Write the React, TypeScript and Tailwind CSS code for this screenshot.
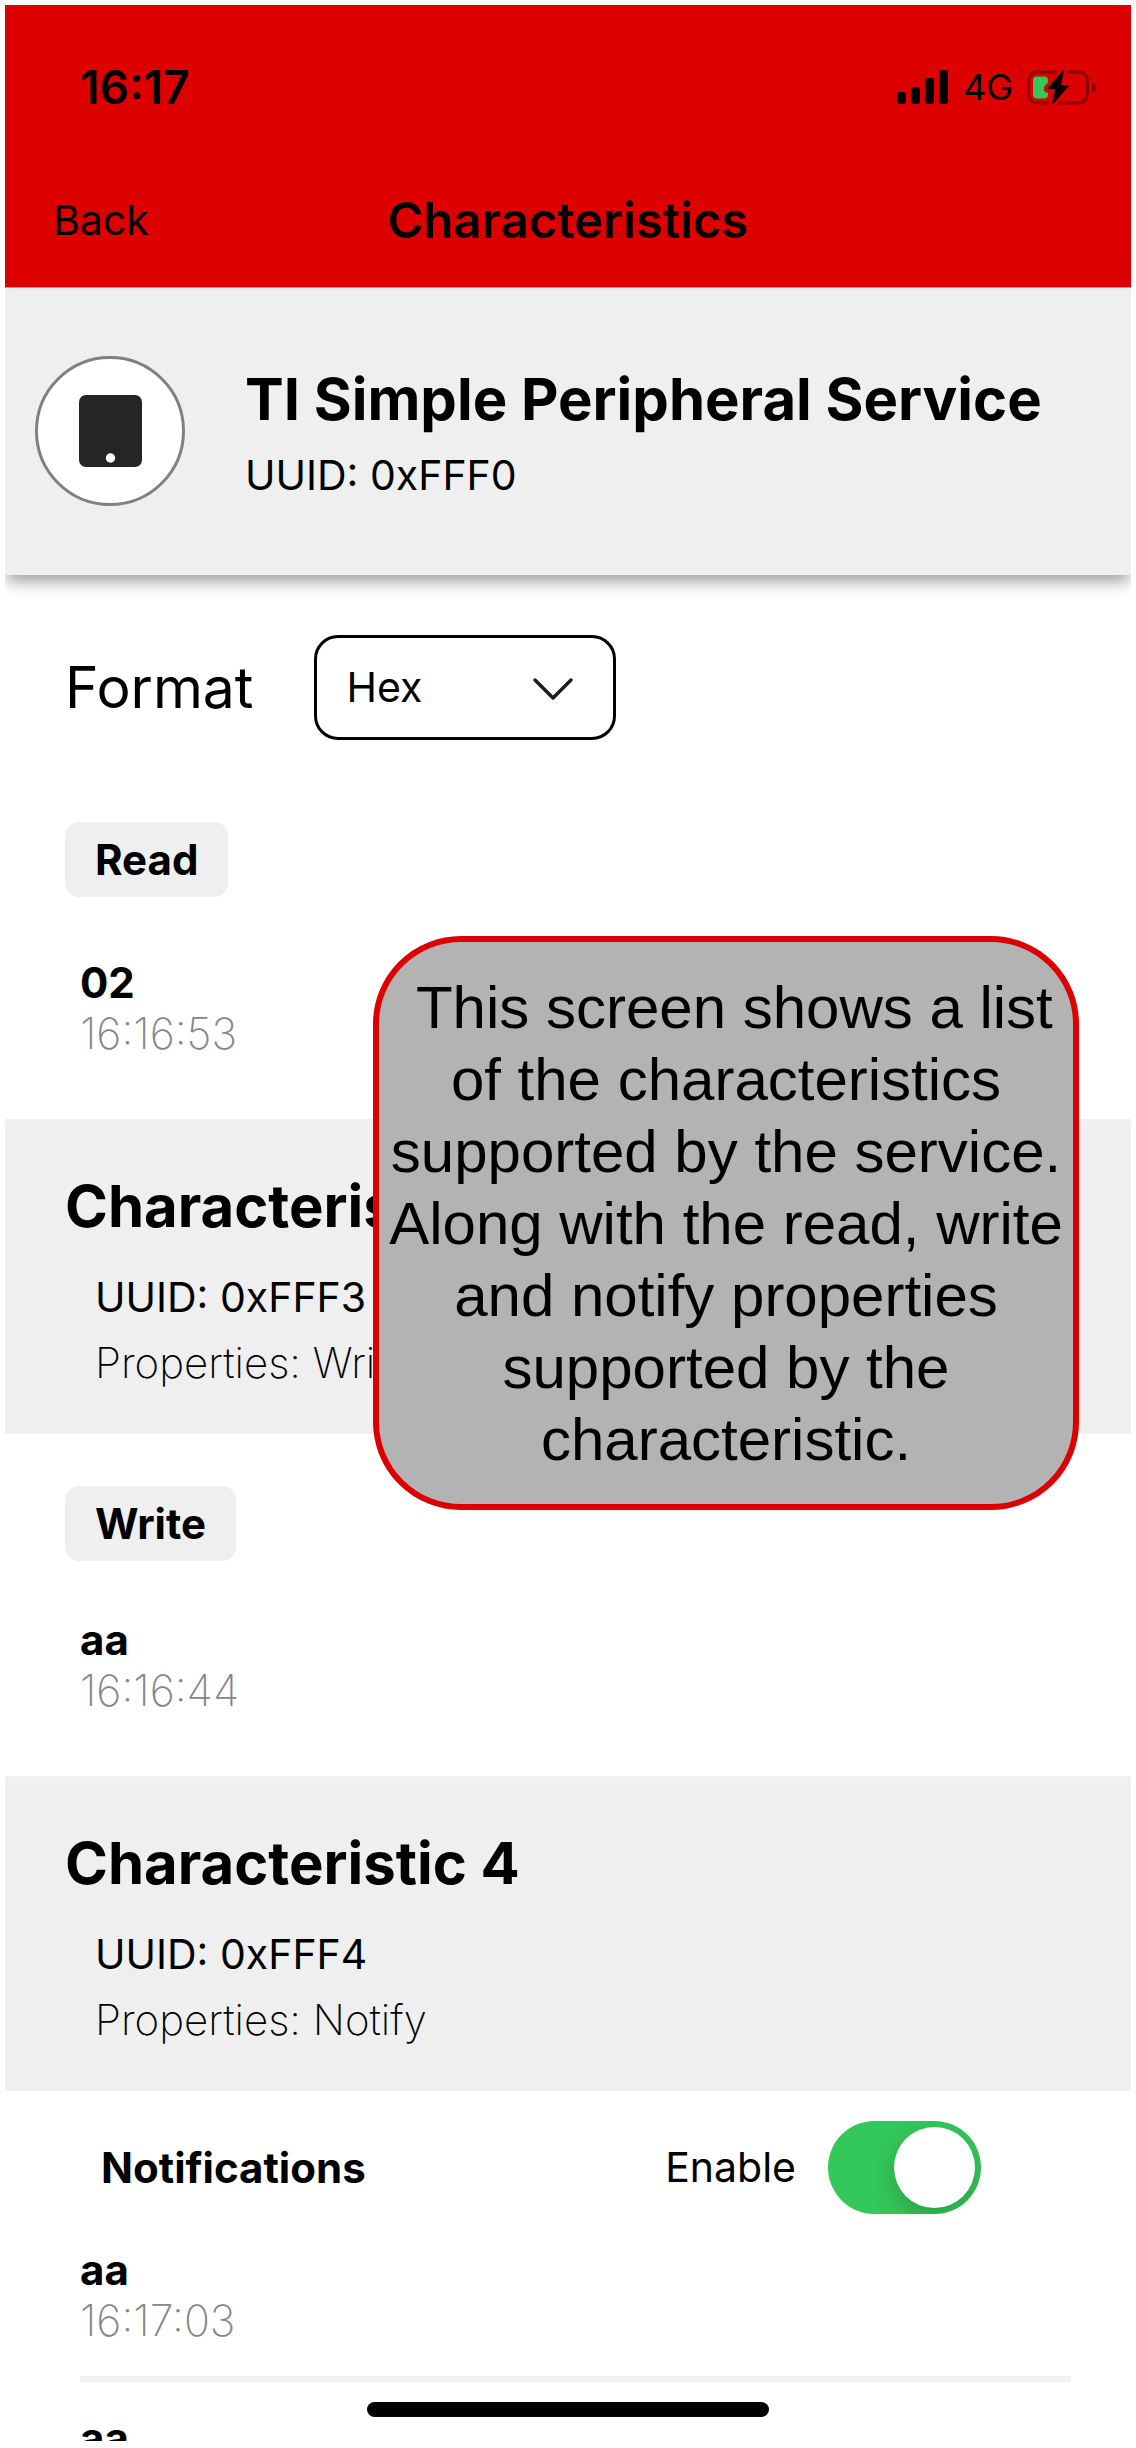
import { useId, useState } from "react";
import type { ReactNode } from "react";

function SignalBars() {
  return (
    <svg width="52" height="34" viewBox="0 0 52 34" aria-hidden="true">
      <rect x="0" y="22" width="9" height="12" rx="3" />
      <rect x="14" y="17" width="9" height="17" rx="3" />
      <rect x="28" y="8" width="9" height="26" rx="3" />
      <rect x="42" y="0" width="9" height="34" rx="3" />
    </svg>
  );
}

const BOLT = "M35.5 .8 20.5 18.2Q20 19.3 21 19.3H28L25.3 33.2Q25.6 34.4 26.6 33.5L41.8 16Q42.3 14.9 41.2 14.9H34L36.8 1.2Q36.6 0 35.5 .8Z";

function Battery() {
  return (
    <svg width="70" height="35" viewBox="0 0 70 35" aria-hidden="true">
      <rect x="1.5" y="2" width="59" height="31" rx="8.5" fill="none" stroke="#8b0000" strokeWidth="3" />
      <path d="M65 12.5Q69 14 69 17.5T65 22.5Z" fill="#8b0000" />
      <rect x="6" y="6.500" width="15" height="22" rx="4" fill="#34c759" />
      <path d={BOLT} fill="#dd0000" stroke="#dd0000" strokeWidth="7" strokeLinejoin="round" />
      <path d={BOLT} fill="#000" />
    </svg>
  );
}

function TabletIcon() {
  return (
    <svg width="63" height="72" viewBox="0 0 63 72" aria-hidden="true">
      <rect width="63" height="72" rx="7" fill="#252525" />
      <circle cx="31.500" cy="63" r="4.700" fill="#fff" />
    </svg>
  );
}

function Entry({ value, time }: { value: string; time: string }) {
  return (
    <div className="px-[75px] leading-[51px]">
      <p className="text-[42px] font-bold">{value}</p>
      <p className="text-[43px] font-extralight text-[#868686]">{time}</p>
    </div>
  );
}

function ActionButton({ children }: { children: ReactNode }) {
  return (
    <button type="button" className="ml-[60px] h-[75px] rounded-[14px] bg-[#efefef] px-[30px] text-[42px] font-bold">
      {children}
    </button>
  );
}

function CharacteristicHeader({ name, uuid, properties }: { name: string; uuid: string; properties: string }) {
  return (
    <header className="border-t-[6px] border-[#f1f1f1] bg-[#efefef] px-[60px] pt-[45px] pb-[38px]">
      <h2 className="text-[58px] leading-[72px] font-bold">{name}</h2>
      <div className="mt-[22px] px-[30px] leading-[66px]">
        <p className="text-[41px]">UUID: {uuid}</p>
        <p className="text-[42px] font-extralight">Properties: {properties}</p>
      </div>
    </header>
  );
}

export default function App() {
  const formatId = useId();
  const enableId = useId();
  const [format, setFormat] = useState("Hex");
  const [enabled, setEnabled] = useState(true);

  return (
    <div className="h-screen bg-white px-[5px] pt-[5px] pb-[7px] font-['Inter',sans-serif] text-black">
      <div className="relative flex h-full flex-col overflow-hidden">
        <div className="shrink-0 border-b border-[#b5a0a0] bg-[#dd0000] pb-[14px]">
          <div className="flex h-[164px] items-center justify-between pr-[34px] pl-[75px]">
            <span className="text-[46px] font-semibold">16:17</span>
            <div className="flex items-center">
              <SignalBars />
              <span className="mr-[14px] ml-[14px] text-[36px]">4G</span>
              <Battery />
            </div>
          </div>
          <nav className="grid h-[104px] grid-cols-[1fr_auto_1fr] items-center px-[48px]">
            <button type="button" className="justify-self-start text-[41px]">Back</button>
            <h1 className="text-[49px] font-semibold">Characteristics</h1>
          </nav>
        </div>

        <section className="relative z-10 flex h-[287px] shrink-0 items-center bg-[#efefef] pb-[2px] pl-[30px] shadow-[0_9px_14px_-2px_rgba(0,0,0,0.36)]">
          <div className="flex size-[150px] items-center justify-center rounded-full border-[3px] border-[#808080] bg-white">
            <TabletIcon />
          </div>
          <div className="ml-[60px] flex flex-col gap-4">
            <h2 className="text-[58px] leading-[72px] font-bold">TI Simple Peripheral Service</h2>
            <p className="text-[41px] leading-[48px]">UUID: 0xFFF0</p>
          </div>
        </section>

        <main className="min-h-0 flex-1 overflow-hidden pt-[60px]">
          <div className="flex items-center gap-[60px] px-[60px]">
            <label htmlFor={formatId} className="text-[57px]">Format</label>
            <div className="relative">
              <select
                id={formatId}
                value={format}
                onChange={(e) => setFormat(e.target.value)}
                className="block h-[105px] w-[302px] appearance-none rounded-[24px] border-[3px] border-black bg-white px-[30px] text-[41px]"
              >
                <option>Hex</option>
                <option>Text</option>
              </select>
              <svg className="pointer-events-none absolute top-[42px] right-[42px]" width="42" height="24" viewBox="0 0 42 24" fill="none" stroke="#1c1c1c" strokeWidth="3.500" strokeLinecap="round" strokeLinejoin="round" aria-hidden="true">
                <path d="M3 3 21 21 39 3" />
              </svg>
            </div>
          </div>

          <section className="pt-[82px] pb-[60px]">
            <ActionButton>Read</ActionButton>
            <div className="mt-[60px]">
              <Entry value="02" time="16:16:53" />
            </div>
          </section>

          <CharacteristicHeader name="Characteristic 3" uuid="0xFFF3" properties="Write" />
          <section className="pt-[52px] pb-[60px]">
            <ActionButton>Write</ActionButton>
            <div className="mt-[53px]">
              <Entry value="aa" time="16:16:44" />
            </div>
          </section>

          <CharacteristicHeader name="Characteristic 4" uuid="0xFFF4" properties="Notify" />
          <section className="pt-[30px]">
            <div className="flex items-center pr-[150px] pl-[96px]">
              <h3 className="flex-1 text-[42px] font-bold">Notifications</h3>
              <label htmlFor={enableId} className="mr-[32px] text-[41px]">Enable</label>
              <input
                id={enableId}
                type="checkbox"
                role="switch"
                checked={enabled}
                onChange={(e) => setEnabled(e.target.checked)}
                className="flex h-[93px] w-[153px] appearance-none items-center overflow-hidden rounded-full bg-[#e9e9eb] px-[6px] before:size-[81px] before:rounded-full before:bg-white before:shadow-[0_9px_24px_rgba(0,0,0,0.2)] before:content-[''] checked:justify-end checked:bg-[#34c759]"
              />
            </div>
            <div className="mt-[30px] pb-[30px]">
              <Entry value="aa" time="16:17:03" />
            </div>
            <hr className="mr-[60px] ml-[75px] border-t-[6px] border-[#f1f1f1]" />
            <div className="pt-[30px]">
              <Entry value="aa" time="16:17:02" />
            </div>
          </section>
        </main>

        <aside className="absolute top-[931px] right-[52px] z-20 w-[706px] rounded-[88px] border-[6px] border-[#dd0000] bg-[#b3b3b3] pt-[30px] pb-[28px] text-center font-['Liberation_Sans',sans-serif] text-[60px] leading-[72px]">
          {"\u00a0"}This screen shows a list of the characteristics supported by the service. Along with the read, write and notify properties supported by the characteristic.
        </aside>

        <div className="absolute bottom-[24px] left-1/2 z-20 h-[15px] w-[402px] -translate-x-1/2 rounded-full bg-black" />
      </div>
    </div>
  );
}
